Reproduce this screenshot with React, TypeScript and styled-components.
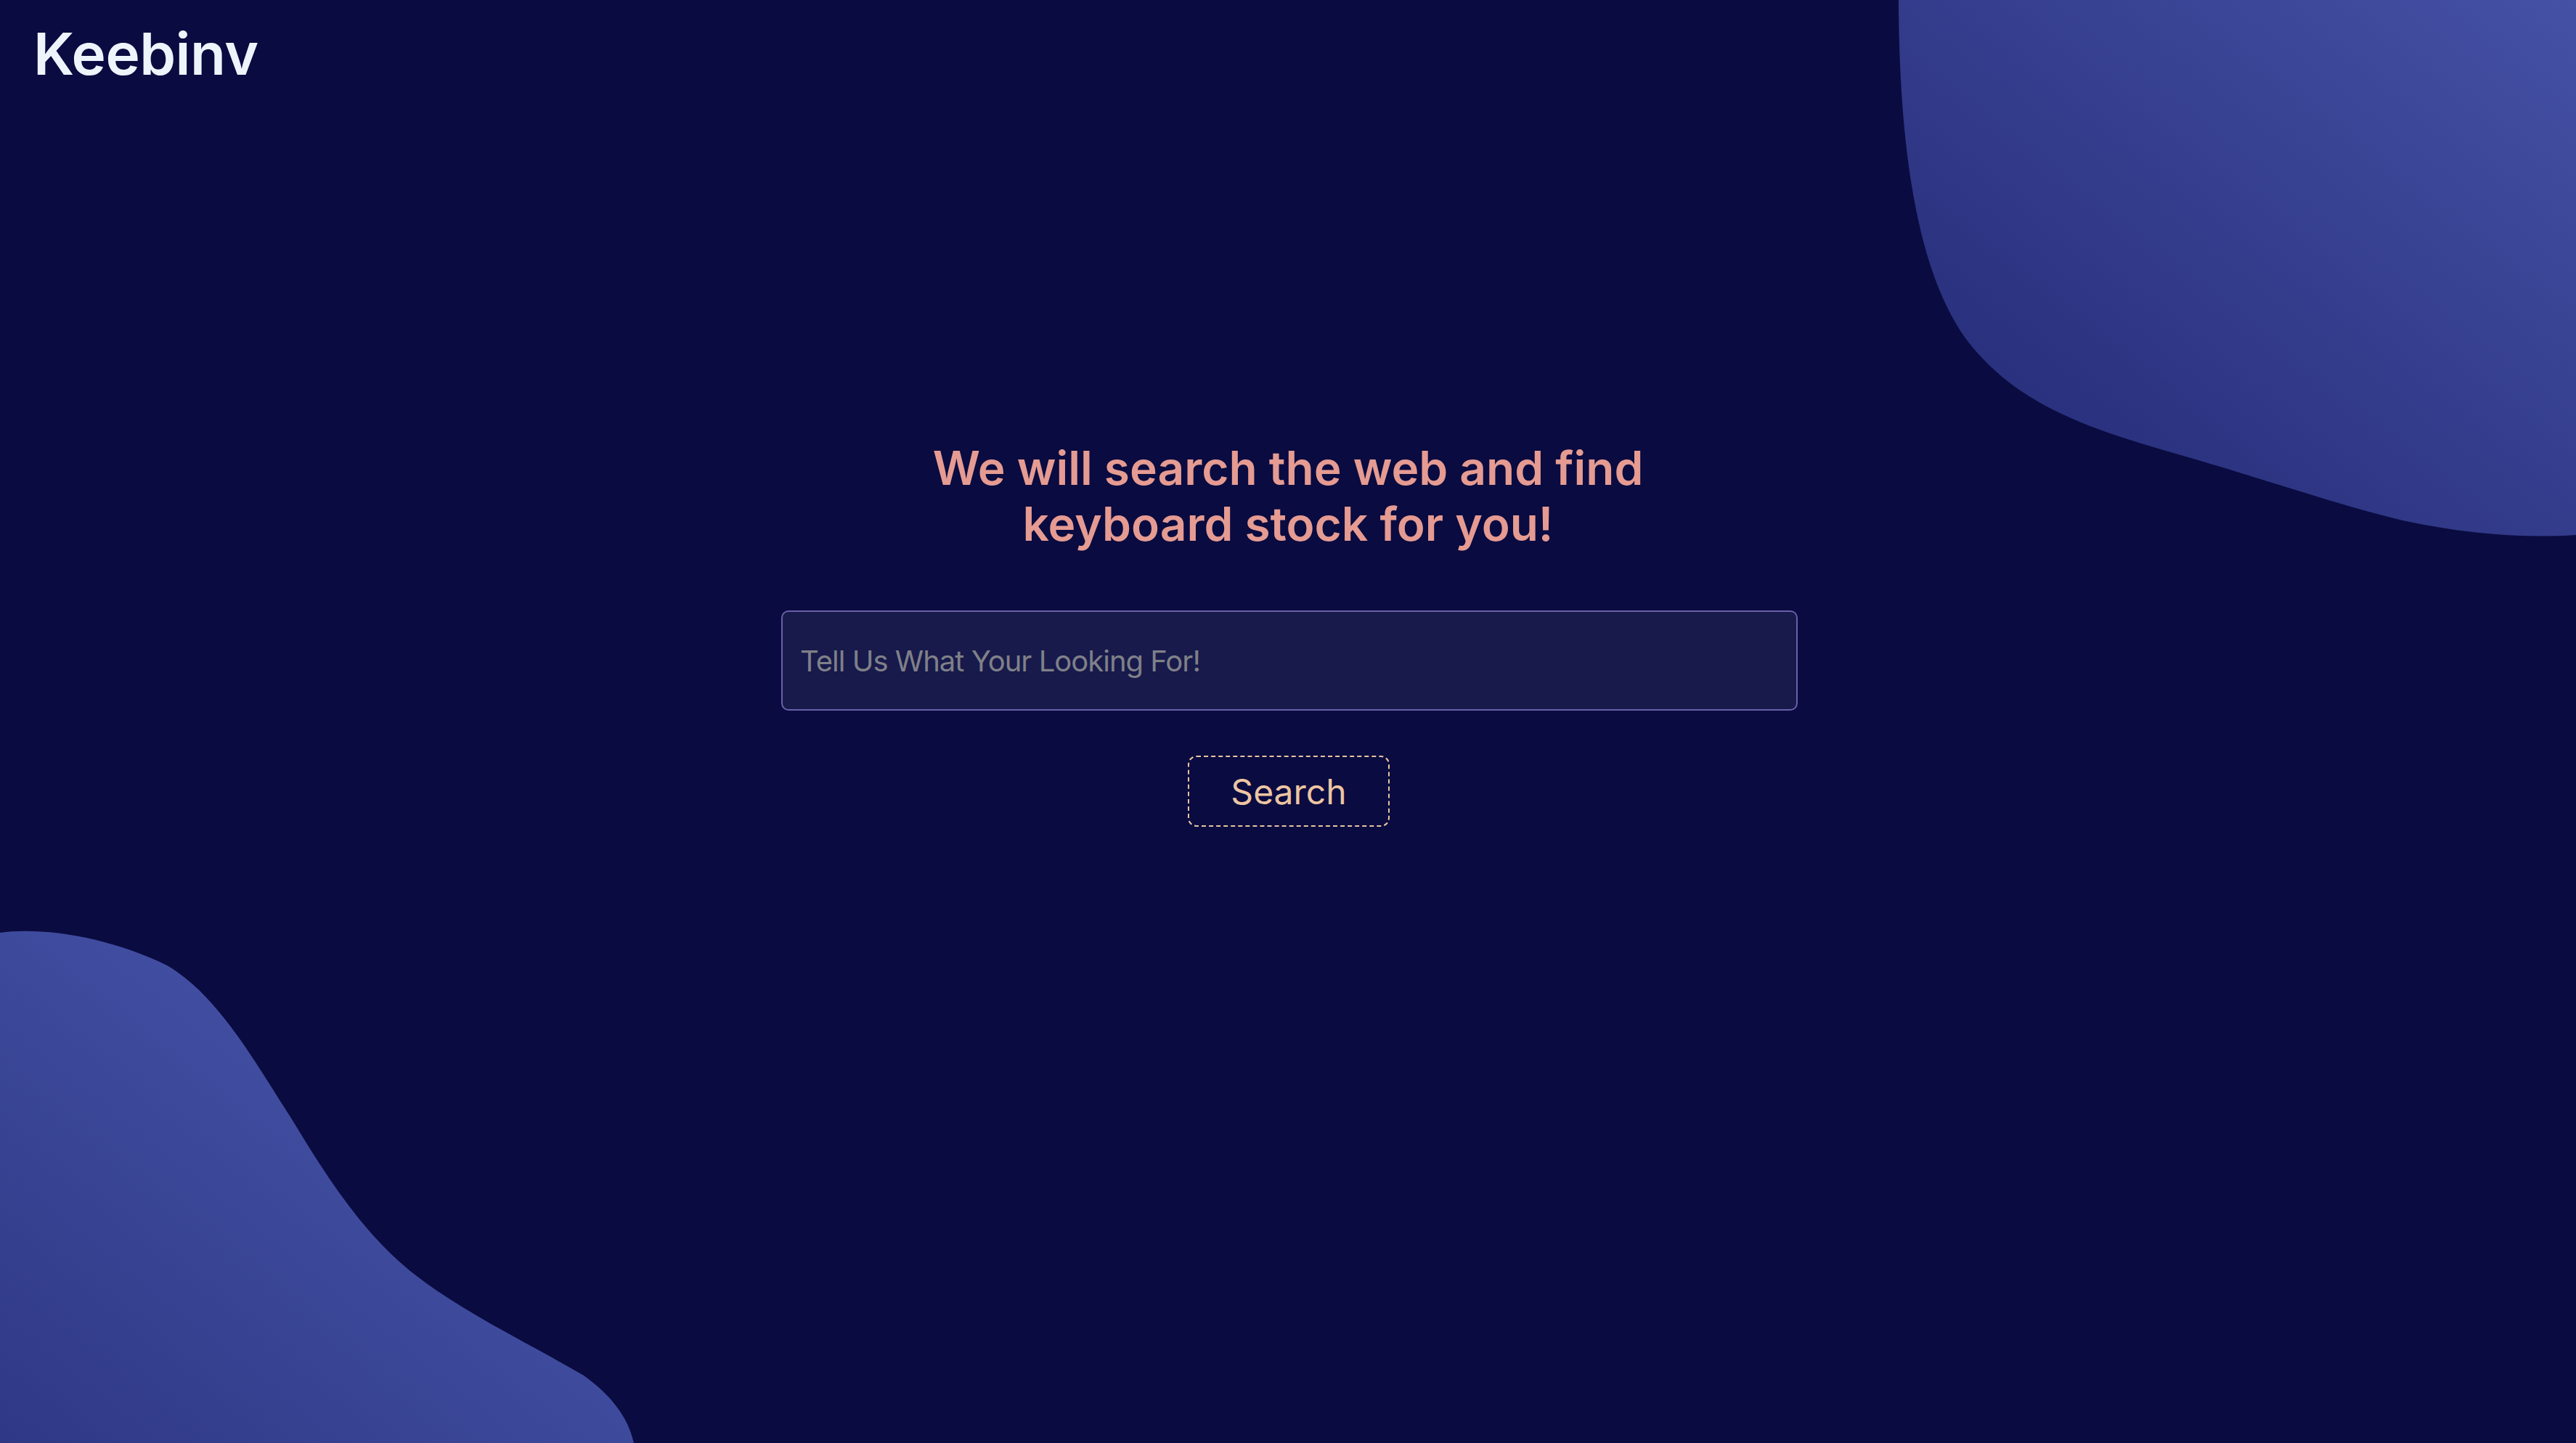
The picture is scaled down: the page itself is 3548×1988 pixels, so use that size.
import React from "react";
import styled, { createGlobalStyle } from "styled-components";

const GlobalStyle = createGlobalStyle`
  html, body {
    margin: 0;
    padding: 0;
    background-color: #0a0b40;
  }

  * {
    box-sizing: border-box;
  }
`;

const Page = styled.div`
  position: relative;
  min-height: 100vh;
  overflow: hidden;
  background-color: #0a0b40;
  font-family: Inter, "Liberation Sans", sans-serif;
`;

const BlobTop = styled.svg`
  position: absolute;
  top: 0;
  right: 0;
  width: 934px;
  height: 740px;
  z-index: 0;
`;

const BlobBottom = styled.svg`
  position: absolute;
  bottom: 0;
  left: 0;
  width: 875px;
  height: 707px;
  z-index: 0;
`;

const Header = styled.header`
  position: relative;
  z-index: 1;
  padding: 25px 0 0 46px;
`;

const Logo = styled.h1`
  margin: 0;
  font-size: 80px;
  font-weight: 600;
  color: #eef4fc;
  letter-spacing: -0.5px;
`;

const Main = styled.main`
  position: relative;
  z-index: 1;
  display: flex;
  flex-direction: column;
  align-items: center;
  padding-top: 484px;
`;

const Heading = styled.h2`
  margin: 0;
  max-width: 1100px;
  font-size: 64px;
  font-weight: 600;
  text-align: center;
  color: #e59b92;
`;

const SearchForm = styled.form`
  display: flex;
  flex-direction: column;
  align-items: center;
  gap: 62px;
  margin-top: 81px;
`;

const SearchInput = styled.input`
  width: 1400px;
  height: 138px;
  margin-left: 4px;
  padding: 0 24px;
  border: 2px solid #6a5fa8;
  border-radius: 10px;
  background-color: #171a4b;
  font-family: Inter, "Liberation Sans", sans-serif;
  font-size: 40px;
  letter-spacing: -1px;
  color: #e6e6ee;
  outline: none;

  &::placeholder {
    color: #808089;
  }
`;

const SearchButton = styled.button`
  width: 278px;
  height: 98px;
  margin-left: 2px;
  border: 2px dashed #e9c3a0;
  border-radius: 12px;
  background: transparent;
  font-family: Inter, "Liberation Sans", sans-serif;
  font-size: 48px;
  font-weight: 400;
  color: #ecc5a2;
  cursor: pointer;
`;

const App: React.FC = () => {
  return (
    <>
      <GlobalStyle />
      <Page>
        <BlobTop viewBox="0 0 934 740" preserveAspectRatio="none">
          <defs>
            <linearGradient id="blobTopFill" x1="0" y1="1" x2="1" y2="0">
              <stop offset="0%" stopColor="#222873" />
              <stop offset="100%" stopColor="#4551a5" />
            </linearGradient>
          </defs>
          <path
            d="M1,0 C2,200 25,380 100,475 C170,560 260,590 400,630 C520,665 620,700 700,718 C780,735 860,742 934,737 L934,0 Z"
            fill="url(#blobTopFill)"
          />
        </BlobTop>
        <BlobBottom viewBox="0 0 875 707" preserveAspectRatio="none">
          <defs>
            <linearGradient id="blobBottomFill" x1="0" y1="1" x2="0.8" y2="0.2">
              <stop offset="0%" stopColor="#2e3885" />
              <stop offset="100%" stopColor="#4754a9" />
            </linearGradient>
          </defs>
          <path
            d="M0,707 L0,4 C60,-4 150,10 230,49 C300,90 350,180 402,261 C450,340 500,420 574,477 C640,528 720,565 804,614 C840,640 865,670 873,707 Z"
            fill="url(#blobBottomFill)"
          />
        </BlobBottom>
        <Header>
          <Logo>Keebinv</Logo>
        </Header>
        <Main>
          <Heading>We will search the web and find keyboard stock for you!</Heading>
          <SearchForm onSubmit={(e) => e.preventDefault()}>
            <SearchInput type="text" placeholder="Tell Us What Your Looking For!" />
            <SearchButton type="submit">Search</SearchButton>
          </SearchForm>
        </Main>
      </Page>
    </>
  );
};

export default App;
